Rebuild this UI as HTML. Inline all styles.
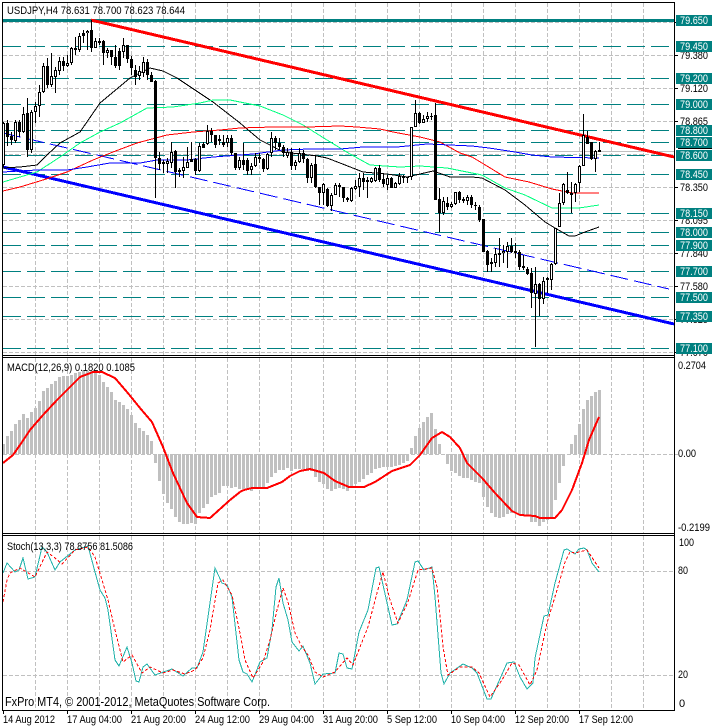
<!DOCTYPE html>
<html><head><meta charset="utf-8"><title>USDJPY,H4</title>
<style>html,body{margin:0;padding:0;background:#fff;width:712px;height:727px;overflow:hidden}svg{display:block}text{font-family:"Liberation Sans",sans-serif;font-size:11px;fill:#000}.t{fill:#fff}</style></head>
<body>
<svg width="712" height="727" viewBox="0 0 712 727" xmlns="http://www.w3.org/2000/svg">
<rect width="712" height="727" fill="#fff"/>
<g shape-rendering="crispEdges">
<!-- grid -->
<path fill="none" stroke="#c0c0c0" stroke-dasharray="4 2" d="M35.5 3V355M67.5 3V355M99.5 3V355M131.5 3V355M163.5 3V355M195.5 3V355M227.5 3V355M259.5 3V355M291.5 3V355M323.5 3V355M355.5 3V355M387.5 3V355M419.5 3V355M451.5 3V355M483.5 3V355M515.5 3V355M547.5 3V355M579.5 3V355M611.5 3V355M643.5 3V355
M35.5 358V533M67.5 358V533M99.5 358V533M131.5 358V533M163.5 358V533M195.5 358V533M227.5 358V533M259.5 358V533M291.5 358V533M323.5 358V533M355.5 358V533M387.5 358V533M419.5 358V533M451.5 358V533M483.5 358V533M515.5 358V533M547.5 358V533M579.5 358V533M611.5 358V533M643.5 358V533
M35.5 536V710M67.5 536V710M99.5 536V710M131.5 536V710M163.5 536V710M195.5 536V710M227.5 536V710M259.5 536V710M291.5 536V710M323.5 536V710M355.5 536V710M387.5 536V710M419.5 536V710M451.5 536V710M483.5 536V710M515.5 536V710M547.5 536V710M579.5 536V710M611.5 536V710M643.5 536V710
M3 22.5H674M3 55.5H674M3 88.5H674M3 121.5H674M3 154.5H674M3 187.5H674M3 220.5H674M3 253.5H674M3 286.5H674M3 319.5H674M3 352.5H674M3 454.5H678M3 571.5H674M3 675.5H674"/>
<path stroke="#c0c0c0" d="M3 151.5H674"/>
<!-- teal levels -->
<path stroke="#008080" stroke-width="3" d="M3 20.5H674"/>
<path fill="none" stroke="#008080" stroke-dasharray="18 6" d="M3 46.5H674M3 78.5H674M3 104.5H674M3 130.5H674M3 142.5H674M3 155.5H674M3 174.5H674M3 213.5H674M3 232.5H674M3 245.5H674M3 271.5H674M3 297.5H674M3 316.5H674M3 348.5H674"/>
<!-- channel -->
<path stroke="#f00" stroke-width="3" d="M91 20L674 157"/>
<path stroke="#00f" stroke-width="3" d="M3 167L674 324"/>
<path stroke="#00f" stroke-dasharray="18 6" d="M3 133L669 289"/>
<!-- MAs -->
<g fill="none">
<polyline stroke="#000" points="3,168 20,167 37,165 47,155 60,143 80,132 100,103 130,78 150,68 163,71 177,78 213,102 240,123 260,140 270,145 283,152 317,156 327,158 340,163 363,172 387,174 407,177 420,174 433,171 450,177 472,177 482,178 505,190 525,205 545,222 555,228 569,236 575,236 585,232 599,227"/>
<polyline stroke="#00ff7f" points="3,182 37,172 60,157 80,143 100,132 120,123 147,108 173,107 200,103 213,100 230,100 240,102 260,106 283,115 303,125 327,140 350,154 370,165 400,167 420,166 447,168 472,173 482,175 505,188 525,195 552,208 579,208 599,205"/>
<polyline stroke="#f00" points="3,191 20,187 43,180 67,172 93,160 113,152 137,143 167,135 193,132 220,130 240,128 273,127 307,127 340,126 357,127 380,129 393,132 420,137 440,142 460,153 472,157 482,163 505,177 529,182 552,189 572,193 599,193"/>
<polyline stroke="#00f" points="3,172 37,170 67,170 87,167 110,163 140,163 157,160 187,160 213,157 240,155 253,154 283,150 310,149 340,149 363,147 397,147 427,144 472,146 489,148 515,152 532,155 552,157 599,158"/>
</g>
<!-- wicks -->
<path stroke="#000" fill="none" d="M3.5 122V167M7.5 120V146M11.5 132V145M15.5 120V143M19.5 120V137M23.5 107V133M27.5 98V157M31.5 110V153M35.5 102V123M39.5 85V117M43.5 63V93M47.5 58V88M51.5 53V87M55.5 67V93M59.5 57V75M63.5 57V71M67.5 55V67M71.5 47V65M75.5 37V55M79.5 33V52M83.5 30V43M87.5 30V50M91.5 20V52M95.5 38V48M99.5 38V45M103.5 40V65M107.5 48V58M111.5 50V65M115.5 45V68M119.5 48V70M123.5 38V58M127.5 45V63M131.5 56V75M135.5 65V85M139.5 66V80M143.5 57V77M147.5 59V80M151.5 72V82M155.5 80V198M159.5 152V170M163.5 160V173M167.5 158V173M171.5 142V168M175.5 150V188M179.5 168V177M183.5 157V178M187.5 147V168M191.5 142V160M195.5 158V175M199.5 143V172M203.5 142V148M207.5 125V145M211.5 128V142M215.5 135V148M219.5 135V145M223.5 135V147M227.5 135V147M231.5 135V155M235.5 153V170M239.5 157V170M243.5 143V170M247.5 158V175M251.5 163V175M255.5 153V167M259.5 153V163M263.5 158V172M267.5 153V170M271.5 132V157M275.5 136V150M279.5 138V150M283.5 145V157M287.5 148V158M291.5 148V170M295.5 160V170M299.5 148V163M303.5 150V163M307.5 158V183M311.5 163V183M315.5 155V188M319.5 187V205M323.5 183V205M327.5 188V207M331.5 193V211M335.5 183V195M339.5 183V197M343.5 187V202M347.5 197V202M351.5 187V202M355.5 180V190M359.5 173V197M363.5 173V190M367.5 177V198M371.5 177V183M375.5 167V182M379.5 165V182M383.5 173V187M387.5 175V190M391.5 177V188M395.5 182V188M399.5 173V185M403.5 175V183M407.5 177V183M411.5 127V180M415.5 100V127M419.5 112V124M423.5 115V123M427.5 112V122M431.5 113V120M435.5 103V200M439.5 188V232M443.5 197V215M447.5 197V210M451.5 202V208M455.5 192V205M459.5 191V203M463.5 197V203M467.5 195V205M471.5 195V208M475.5 202V210M479.5 205V222M483.5 219V252M487.5 250V272M491.5 258V272M495.5 248V267M499.5 238V267M503.5 245V263M507.5 242V268M511.5 238V253M515.5 243V258M519.5 250V270M523.5 255V270M527.5 267V275M531.5 268V308M535.5 267V347M539.5 283V316M543.5 277V304M547.5 277V293M551.5 263V290M555.5 228V265M559.5 193V227M563.5 183V205M567.5 172V194M571.5 182V213M575.5 183V202M579.5 165V192M583.5 114V166M587.5 131V144M591.5 142V160M595.5 150V172M599.5 142V152"/>
<!-- bodies (outer) -->
<path stroke="#000" stroke-width="3" fill="none" d="M3.5 123V165M7.5 123V137M11.5 136V140M15.5 122V141M19.5 122V132M23.5 114V132M27.5 113V150M31.5 112V150M35.5 106V112M39.5 92V106M43.5 66V92M47.5 66V85M51.5 76V85M55.5 70V77M59.5 61V71M63.5 61V66M67.5 63V66M71.5 48V63M75.5 48V50M79.5 36V50M83.5 33V36M87.5 31V33M91.5 30V48M95.5 41V48M99.5 41V43M103.5 41V53M107.5 50V53M111.5 50V57M115.5 57V66M119.5 51V66M123.5 45V52M127.5 45V59M131.5 59V68M135.5 70V77M139.5 71V76M143.5 62V73M147.5 62V75M151.5 75V82M155.5 81V158M159.5 158V164M163.5 162V164M167.5 161V164M171.5 152V163M175.5 151V172M179.5 170V172M183.5 167V171M187.5 162V168M191.5 159V162M195.5 159V171M199.5 146V171M203.5 144V148M207.5 131V144M211.5 131V135M215.5 135V145M219.5 139V141M223.5 142V145M227.5 138V143M231.5 138V153M235.5 153V168M239.5 160V168M243.5 160V165M247.5 160V171M251.5 166V170M255.5 157V166M259.5 157V159M263.5 159V169M267.5 154V169M271.5 138V153M275.5 138V143M279.5 143V147M283.5 147V153M287.5 152V156M291.5 152V166M295.5 162V166M299.5 153V162M303.5 153V159M307.5 159V178M311.5 165V178M315.5 164V187M319.5 187V193M323.5 184V193M327.5 189V206M331.5 195V206M335.5 185V195M339.5 185V187M343.5 187V198M347.5 198V200M351.5 188V201M355.5 186V189M359.5 178V187M363.5 178V182M367.5 180V182M371.5 178V182M375.5 168V181M379.5 168V180M383.5 179V184M387.5 178V185M391.5 178V188M395.5 183V188M399.5 176V184M403.5 177V178M407.5 177V178M411.5 127V177M415.5 113V127M419.5 113V123M423.5 119V123M427.5 116V119M431.5 116V117M435.5 115V200M439.5 199V213M443.5 201V213M447.5 203V207M451.5 204V207M455.5 192V204M459.5 192V200M463.5 199V201M467.5 197V201M471.5 197V205M475.5 205V206M479.5 207V220M483.5 219V252M487.5 251V265M491.5 262V264M495.5 254V263M499.5 253V255M503.5 251V253M507.5 246V252M511.5 246V252M515.5 251V253M519.5 252V267M523.5 266V268M527.5 269V274M531.5 273V293M535.5 284V294M539.5 284V299M543.5 281V299M547.5 278V280M551.5 264V280M555.5 228V264M559.5 203V227M563.5 184V203M567.5 190V193M571.5 193V195M575.5 184V193M579.5 166V183M583.5 135V166M587.5 137V144M591.5 142V159M595.5 151V159M599.5 150V152"/>
<!-- bodies (white interior) -->
<path stroke="#fff" fill="none" d="M3.5 124V164M15.5 123V140M23.5 115V131M31.5 113V149M35.5 107V111M39.5 93V105M43.5 67V91M51.5 77V84M55.5 71V76M59.5 62V70M67.5 64V65M71.5 49V62M79.5 37V49M87.5 32V32.5M95.5 42V47M107.5 51V52M123.5 46V51M139.5 72V75M143.5 63V72M167.5 162V163M171.5 153V162M183.5 168V170M187.5 163V167M199.5 147V170M207.5 132V143M227.5 139V142M239.5 161V167M251.5 167V169M255.5 158V165M267.5 155V168M271.5 139V152M287.5 153V155M295.5 163V165M299.5 154V161M311.5 166V177M323.5 185V192M331.5 196V205M335.5 186V194M351.5 189V200M355.5 187V188M359.5 179V186M371.5 179V181M375.5 169V180M387.5 179V184M395.5 184V187M399.5 177V183M411.5 128V176M415.5 114V126M423.5 120V122M427.5 117V118M443.5 202V212M451.5 205V206M455.5 193V203M467.5 198V200M495.5 255V262M503.5 252V252.5M507.5 247V251M535.5 285V293M543.5 282V298M551.5 265V279M555.5 229V263M559.5 204V226M563.5 185V202M575.5 185V192M579.5 167V182M583.5 136V165M595.5 152V158"/>
<!-- MACD histogram -->
<path stroke="#c0c0c0" stroke-width="3" fill="none" d="M3.5 454V444M7.5 454V436M11.5 454V431M15.5 454V424M19.5 454V420M23.5 454V414M27.5 454V418M31.5 454V412M35.5 454V408M39.5 454V401M43.5 454V391M47.5 454V388M51.5 454V384M55.5 454V381M59.5 454V377M63.5 454V376M67.5 454V376M71.5 454V375M75.5 454V373M79.5 454V372M83.5 454V370M87.5 454V371M91.5 454V371M95.5 454V372M99.5 454V375M103.5 454V382M107.5 454V387M111.5 454V392M115.5 454V400M119.5 454V402M123.5 454V405M127.5 454V409M131.5 454V415M135.5 454V423M139.5 454V428M143.5 454V431M147.5 454V435M151.5 454V441M155.5 454V463M159.5 454V481M163.5 454V494M167.5 454V503M171.5 454V509M175.5 454V517M179.5 454V522M183.5 454V524M187.5 454V524M191.5 454V523M195.5 454V524M199.5 454V513M203.5 454V508M207.5 454V504M211.5 454V497M215.5 454V495M219.5 454V493M223.5 454V486M227.5 454V486M231.5 454V488M235.5 454V487M239.5 454V489M243.5 454V489M247.5 454V489M251.5 454V491M255.5 454V489M259.5 454V488M263.5 454V488M267.5 454V483M271.5 454V477M275.5 454V473M279.5 454V470M283.5 454V470M287.5 454V468M291.5 454V471M295.5 454V469M299.5 454V469M303.5 454V469M307.5 454V471M311.5 454V471M315.5 454V477M319.5 454V482M323.5 454V484M327.5 454V489M331.5 454V491M335.5 454V489M339.5 454V488M343.5 454V489M347.5 454V491M351.5 454V487M355.5 454V484M359.5 454V482M363.5 454V479M367.5 454V475M371.5 454V473M375.5 454V469M379.5 454V468M383.5 454V467M387.5 454V467M391.5 454V467M395.5 454V466M399.5 454V465M403.5 454V463M407.5 454V461M411.5 454V448M415.5 454V436M419.5 454V428M423.5 454V422M427.5 454V417M431.5 454V413M435.5 454V429M439.5 454V444M447.5 454V464M451.5 454V471M455.5 454V473M459.5 454V476M463.5 454V478M467.5 454V478M471.5 454V480M475.5 454V482M479.5 454V483M483.5 454V497M487.5 454V507M491.5 454V513M495.5 454V517M499.5 454V518M503.5 454V517M507.5 454V514M511.5 454V513M515.5 454V512M519.5 454V514M523.5 454V515M527.5 454V516M531.5 454V522M535.5 454V522M539.5 454V526M543.5 454V522M547.5 454V520M551.5 454V518M555.5 454V500M559.5 454V483M563.5 454V466M571.5 454V444M575.5 454V435M579.5 454V424M583.5 454V409M587.5 454V400M591.5 454V396M595.5 454V392M599.5 454V390"/>
<polyline fill="none" stroke="#f00" stroke-width="2" points="3,463 13,455 20,445 30,430 43,415 57,400 70,387 80,377 93,372 102,372 115,378 127,392 140,408 152,422 163,447 173,473 187,503 197,517 210,518 230,500 240,492 244,490 252,488 267,488 282,482 290,476 300,471 310,469 324,473 335,481 349,487 364,487 375,482 392,471 410,465 420,455 432,438 442,432 450,437 460,448 467,463 473,469 482,478 495,493 512,511 520,515 535,516 540,518 555,518 562,510 572,490 582,463 589,440 599,417"/>
<!-- Stochastic -->
<polyline fill="none" stroke="#20b2aa" points="3,573 7,563 15,572 19,570 23,558 28,579 35,577 42,547 47,552 55,570 60,562 75,550 88,546 95,572 100,590 105,598 108,610 115,660 119,666 127,647 132,663 136,681 139,682 143,667 147,664 155,675 172,669 183,676 192,668 197,668 203,652 215,568 222,583 227,585 232,597 239,660 243,672 247,674 252,682 260,662 267,658 272,630 276,587 279,578 283,603 288,620 292,642 299,651 303,646 310,663 315,684 323,674 335,673 339,653 343,654 347,668 352,669 359,632 368,610 376,568 379,567 392,625 397,624 407,600 415,562 418,561 424,570 432,567 435,597 441,673 444,684 450,673 463,664 472,668 477,673 487,699 491,699 507,663 514,662 520,677 527,689 533,683 535,658 544,616 548,615 555,583 564,550 567,549 575,554 579,549 584,548 587,550 592,563 599,572"/>
<polyline fill="none" stroke="#f00" stroke-dasharray="3 2" points="3,602 7,580 10,573 20,568 35,577 47,552 55,558 62,564 75,550 88,547 95,557 102,580 108,600 115,630 123,662 132,655 142,673 150,667 163,673 173,670 185,674 195,670 203,658 210,630 218,583 223,580 232,595 240,633 245,660 253,678 263,662 270,640 277,610 283,588 288,602 295,633 302,647 308,655 315,672 323,677 335,672 347,658 353,665 360,647 368,627 377,593 383,572 390,600 398,623 408,602 418,570 432,568 437,587 443,647 448,675 460,667 472,667 479,673 490,697 502,680 512,663 519,665 530,685 537,670 547,623 557,590 565,562 570,552 575,553 587,550 599,568"/>
<!-- frames -->
<path stroke="#000" fill="none" d="M2.5 2.5H674.5V710.5H2.5ZM2 355.5H675M2 357.5H675M2 533.5H675M2 535.5H675"/>
<path stroke="#000" fill="none" d="M675 22.5H678M675 55.5H678M675 88.5H678M675 121.5H678M675 187.5H678M675 220.5H678M675 253.5H678M675 286.5H678M675 319.5H678M675 352.5H678M3.5 711V714M67.5 711V714M131.5 711V714M195.5 711V714M259.5 711V714M323.5 711V714M387.5 711V714M451.5 711V714M515.5 711V714M579.5 711V714"/>
</g>
<!-- panel text -->
<text x="7" y="14" textLength="178" lengthAdjust="spacingAndGlyphs">USDJPY,H4  78.631 78.700 78.623 78.644</text>
<text x="7" y="371" textLength="128" lengthAdjust="spacingAndGlyphs">MACD(12,26,9) 0.1820 0.1085</text>
<text x="7" y="550" textLength="126" lengthAdjust="spacingAndGlyphs">Stoch(13,3,3) 78.8756 81.5086</text>
<text x="5" y="706" textLength="265" lengthAdjust="spacingAndGlyphs" style="font-size:13px">FxPro MT4, © 2001-2012, MetaQuotes Software Corp.</text>
<!-- right axis labels -->
<text x="680" y="59" textLength="28" lengthAdjust="spacingAndGlyphs">79.380</text>
<text x="680" y="92" textLength="28" lengthAdjust="spacingAndGlyphs">79.120</text>
<text x="680" y="125" textLength="28" lengthAdjust="spacingAndGlyphs">78.865</text>
<text x="680" y="191" textLength="28" lengthAdjust="spacingAndGlyphs">78.350</text>
<text x="680" y="224" textLength="28" lengthAdjust="spacingAndGlyphs">78.095</text>
<text x="680" y="257" textLength="28" lengthAdjust="spacingAndGlyphs">77.840</text>
<text x="680" y="290" textLength="28" lengthAdjust="spacingAndGlyphs">77.580</text>
<text x="680" y="323" textLength="28" lengthAdjust="spacingAndGlyphs">77.325</text>
<text x="680" y="356" textLength="28" lengthAdjust="spacingAndGlyphs">77.070</text>
<g shape-rendering="crispEdges" fill="#008080">
<rect x="678" y="146" width="34" height="3" fill="#000"/>
<rect x="676" y="15" width="36" height="11"/><rect x="676" y="41" width="36" height="11"/><rect x="676" y="73" width="36" height="11"/><rect x="676" y="99" width="36" height="11"/><rect x="676" y="125" width="36" height="11"/><rect x="676" y="137" width="36" height="11"/><rect x="676" y="150" width="36" height="11"/><rect x="676" y="169" width="36" height="11"/><rect x="676" y="208" width="36" height="11"/><rect x="676" y="227" width="36" height="11"/><rect x="676" y="240" width="36" height="11"/><rect x="676" y="266" width="36" height="11"/><rect x="676" y="292" width="36" height="11"/><rect x="676" y="311" width="36" height="11"/><rect x="676" y="343" width="36" height="11"/>
</g>
<g class="tags">
<text class="t" x="680" y="24" textLength="28" lengthAdjust="spacingAndGlyphs">79.650</text>
<text class="t" x="680" y="50" textLength="28" lengthAdjust="spacingAndGlyphs">79.450</text>
<text class="t" x="680" y="82" textLength="28" lengthAdjust="spacingAndGlyphs">79.200</text>
<text class="t" x="680" y="108" textLength="28" lengthAdjust="spacingAndGlyphs">79.000</text>
<text class="t" x="680" y="134" textLength="28" lengthAdjust="spacingAndGlyphs">78.800</text>
<text class="t" x="680" y="146" textLength="28" lengthAdjust="spacingAndGlyphs">78.700</text>
<text class="t" x="680" y="159" textLength="28" lengthAdjust="spacingAndGlyphs">78.600</text>
<text class="t" x="680" y="178" textLength="28" lengthAdjust="spacingAndGlyphs">78.450</text>
<text class="t" x="680" y="217" textLength="28" lengthAdjust="spacingAndGlyphs">78.150</text>
<text class="t" x="680" y="236" textLength="28" lengthAdjust="spacingAndGlyphs">78.000</text>
<text class="t" x="680" y="249" textLength="28" lengthAdjust="spacingAndGlyphs">77.900</text>
<text class="t" x="680" y="275" textLength="28" lengthAdjust="spacingAndGlyphs">77.700</text>
<text class="t" x="680" y="301" textLength="28" lengthAdjust="spacingAndGlyphs">77.500</text>
<text class="t" x="680" y="320" textLength="28" lengthAdjust="spacingAndGlyphs">77.350</text>
<text class="t" x="680" y="352" textLength="28" lengthAdjust="spacingAndGlyphs">77.100</text>
</g>
<text x="678" y="369" textLength="28" lengthAdjust="spacingAndGlyphs">0.2704</text>
<text x="678" y="457" textLength="18" lengthAdjust="spacingAndGlyphs">0.00</text>
<text x="678" y="531" textLength="32" lengthAdjust="spacingAndGlyphs">-0.2199</text>
<text x="679" y="546" textLength="15" lengthAdjust="spacingAndGlyphs">100</text>
<text x="678" y="574" textLength="10" lengthAdjust="spacingAndGlyphs">80</text>
<text x="678" y="678" textLength="10" lengthAdjust="spacingAndGlyphs">20</text>
<text x="679" y="707">0</text>
<!-- time axis -->
<text x="3" y="723" textLength="52" lengthAdjust="spacingAndGlyphs">14 Aug 2012</text>
<text x="67" y="723" textLength="55" lengthAdjust="spacingAndGlyphs">17 Aug 04:00</text>
<text x="131" y="723" textLength="55" lengthAdjust="spacingAndGlyphs">21 Aug 20:00</text>
<text x="195" y="723" textLength="55" lengthAdjust="spacingAndGlyphs">24 Aug 12:00</text>
<text x="259" y="723" textLength="55" lengthAdjust="spacingAndGlyphs">29 Aug 04:00</text>
<text x="323" y="723" textLength="55" lengthAdjust="spacingAndGlyphs">31 Aug 20:00</text>
<text x="387" y="723" textLength="50" lengthAdjust="spacingAndGlyphs">5 Sep 12:00</text>
<text x="451" y="723" textLength="54" lengthAdjust="spacingAndGlyphs">10 Sep 04:00</text>
<text x="515" y="723" textLength="54" lengthAdjust="spacingAndGlyphs">12 Sep 20:00</text>
<text x="579" y="723" textLength="54" lengthAdjust="spacingAndGlyphs">17 Sep 12:00</text>
</svg>
</body></html>
